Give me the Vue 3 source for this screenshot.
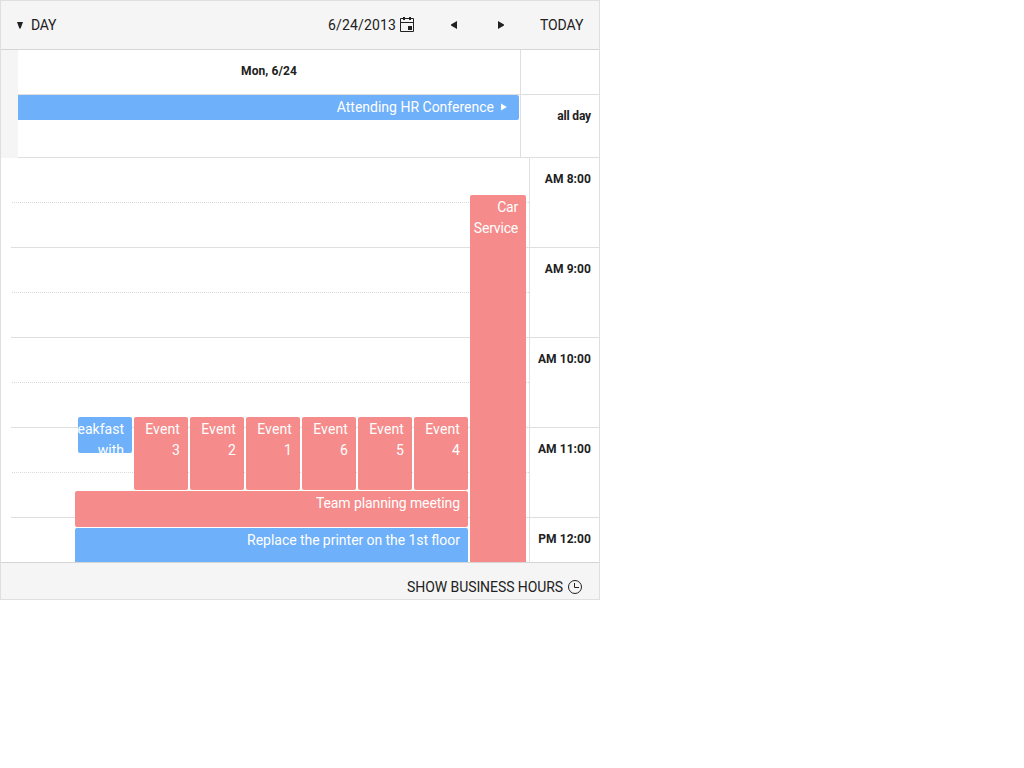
<script setup>
const hours = ['AM 8:00', 'AM 9:00', 'AM 10:00', 'AM 11:00', 'PM 12:00']

// Geometry is relative to the top left corner of the scrolling grid.
const events = [
  { title: 'Car Service', x: 469, y: 37, w: 56, h: 420, tone: 'red', fit: 'tight' },
  { title: 'Breakfast with', x: 77, y: 259, w: 54, h: 36, tone: 'blue' },
  { title: 'Event 3', x: 133, y: 259, w: 54, h: 73, tone: 'red', fit: 'loose' },
  { title: 'Event 2', x: 189, y: 259, w: 54, h: 73, tone: 'red', fit: 'loose' },
  { title: 'Event 1', x: 245, y: 259, w: 54, h: 73, tone: 'red', fit: 'loose' },
  { title: 'Event 6', x: 301, y: 259, w: 54, h: 73, tone: 'red', fit: 'loose' },
  { title: 'Event 5', x: 357, y: 259, w: 54, h: 73, tone: 'red', fit: 'loose' },
  { title: 'Event 4', x: 413, y: 259, w: 54, h: 73, tone: 'red', fit: 'loose' },
  { title: 'Team planning meeting', x: 74, y: 333, w: 393, h: 36, tone: 'red', fit: 'snug' },
  { title: 'Replace the printer on the 1st floor', x: 74, y: 370, w: 393, h: 80, tone: 'blue', fit: 'words' },
]

const place = (e) => ({
  left: e.x + 'px',
  top: e.y + 'px',
  width: e.w + 'px',
  height: e.h + 'px',
})
</script>

<template>
  <div class="scheduler">
    <header class="toolbar">
      <div class="views">
        <svg class="caret" width="6" height="7" viewBox="0 0 6 7"><path d="M0 0h6L3.6 6.5H2.4z" /></svg>
        <span class="view-name">DAY</span>
      </div>
      <div class="date">
        <span class="date-text">6/24/2013</span>
        <svg class="calendar" width="14" height="16" viewBox="0 0 14 16">
          <path d="M0.5 1.5h13v13h-13zM0 5.5h14" fill="none" stroke="#212121" />
          <path d="M3 0h2v3H3zM9 0h2v3H9zM8 9h4v4H8z" />
        </svg>
      </div>
      <svg class="prev" width="6" height="8" viewBox="0 0 6 8"><path d="M6 0v8L0 4.5v-1z" /></svg>
      <svg class="next" width="6" height="8" viewBox="0 0 6 8"><path d="M0 0v8l6-3.5v-1z" /></svg>
      <span class="today">TODAY</span>
    </header>

    <div class="head">
      <div class="gutter"></div>
      <div class="head-main">
        <div class="day-title">Mon, 6/24</div>
        <div class="all-day-slot">
          <div class="all-day-event">
            <span>Attending HR Conference</span>
            <svg class="more" width="6" height="8" viewBox="0 0 6 8"><path d="M0 0.5v7L5.8 4z" /></svg>
          </div>
        </div>
      </div>
      <div class="head-times">
        <div class="corner"></div>
        <div class="all-day-label">all day</div>
      </div>
    </div>

    <main class="body">
      <div class="slots">
        <div v-for="h in hours" :key="h" class="slot"><div class="half"></div></div>
      </div>
      <div class="times">
        <div v-for="h in hours" :key="h" class="time">{{ h }}</div>
      </div>
      <div v-for="e in events" :key="e.title" class="event" :class="[e.tone, e.fit]" :style="place(e)">
        <div class="event-text">{{ e.title }}</div>
      </div>
    </main>

    <footer class="footer">
      <span class="hours-toggle">SHOW BUSINESS HOURS</span>
      <svg width="14" height="14" viewBox="0 0 14 14" fill="none" stroke="#212121">
        <circle cx="7" cy="7" r="6.5" />
        <path d="M6.5 3v4.5H11" />
      </svg>
    </footer>
  </div>
</template>

<style>
body {
  background: #fff;
}
</style>

<style scoped>
.scheduler {
  box-sizing: border-box;
  width: 600px;
  height: 600px;
  border: 1px solid #dfdfdf;
  display: flex;
  flex-direction: column;
  font: 14px/21px Roboto, sans-serif;
  color: #212121;
  fill: #212121;
  background: #fff;
  overflow: hidden;
}
.scheduler * {
  box-sizing: border-box;
}
svg {
  display: block;
  flex: none;
}
.toolbar {
  height: 49px;
  flex: none;
  display: flex;
  align-items: center;
  background: #f5f5f5;
  border-bottom: 1px solid #d5d5d5;
  padding: 0 16px;
}
.views {
  display: flex;
  align-items: center;
  gap: 8px;
  margin-right: auto;
}
.view-name {
  letter-spacing: -0.3px;
}
.date {
  display: flex;
  align-items: center;
  gap: 4px;
}
.date-text {
  letter-spacing: 0.15px;
}
.prev {
  margin-left: 37px;
}
.next {
  margin-left: 41px;
}
.today {
  width: 44px;
  margin-left: 35px;
  padding-left: 1px;
  letter-spacing: -0.1px;
}
.head {
  height: 108px;
  flex: none;
  display: flex;
}
.gutter {
  width: 17px;
  background: #f5f5f5;
}
.head-main {
  width: 502px;
}
.head-times {
  flex: 1;
  border-left: 1px solid #dfdfdf;
}
.day-title,
.corner {
  height: 45px;
  border-bottom: 1px solid #dfdfdf;
}
.day-title {
  font-size: 12px;
  font-weight: 700;
  text-align: center;
  line-height: 42px;
  letter-spacing: 0.08px;
}
.all-day-slot,
.all-day-label {
  height: 63px;
  border-bottom: 1px solid #dfdfdf;
}
.all-day-label {
  font-size: 12px;
  font-weight: 700;
  text-align: right;
  padding: 11px 8px 0 0;
  letter-spacing: -0.15px;
}
.all-day-event {
  width: 501px;
  height: 25px;
  display: flex;
  justify-content: flex-end;
  align-items: center;
  gap: 7px;
  padding-right: 12px;
  background: #6eb0fa;
  color: #fff;
  fill: #fff;
  border-radius: 0 2px 2px 0;
}
.more {
  margin-bottom: 1px;
}
.body {
  position: relative;
  flex: 1;
  min-height: 0;
  overflow: hidden;
  display: flex;
  align-items: flex-start;
}
.slots {
  width: 518px;
  margin-left: 10px;
}
.slot {
  height: 90px;
  border-bottom: 1px solid #dfdfdf;
}
.half {
  height: 45px;
  margin-left: 1px;
  border-bottom: 1px dotted #dadada;
}
.times {
  flex: 1;
  border-left: 1px solid #dfdfdf;
}
.time {
  height: 90px;
  border-bottom: 1px solid #dfdfdf;
  font-size: 12px;
  font-weight: 700;
  text-align: right;
  padding: 11px 8px 0 0;
  letter-spacing: 0.08px;
}
.event {
  position: absolute;
  border-radius: 2px;
  overflow: hidden;
  direction: rtl;
  color: #fff;
  padding: 2px 8px 0;
}
.tight {
  letter-spacing: -0.2px;
}
.loose {
  letter-spacing: 0.12px;
}
.snug {
  letter-spacing: -0.09px;
}
.words {
  word-spacing: -0.25px;
}
.red {
  background: #f58b8a;
}
.blue {
  background: #6eb0fa;
}
.footer {
  height: 37px;
  flex: none;
  display: flex;
  gap: 5px;
  justify-content: flex-end;
  align-items: center;
  padding: 12px 17px 0 0;
  background: #f5f5f5;
  border-top: 1px solid #d5d5d5;
}
.hours-toggle {
  letter-spacing: -0.08px;
}
</style>
